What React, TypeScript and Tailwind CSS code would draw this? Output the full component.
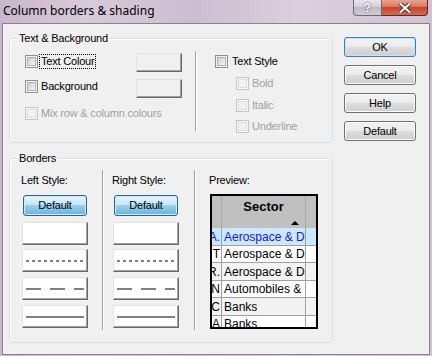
import React from 'react';

const dlg = { fontFamily: '"Liberation Sans", Arial, sans-serif' };

function Check({ disabled }: { disabled?: boolean }) {
  if (disabled) {
    return (
      <span className="block w-[13px] h-[13px] shrink-0 border border-[#c6c6c6] bg-[#f7f7f7] p-[1px]">
        <span className="block w-full h-full border border-[#dedede] bg-[#f2f2f2]" />
      </span>
    );
  }
  return (
    <span className="block w-[13px] h-[13px] shrink-0 border border-[#8e8f8f] bg-[#f4f4f4] p-[1px]">
      <span className="block w-full h-full border border-[#aeb0b3] bg-[linear-gradient(135deg,#cbcbcb,#f6f6f6)]" />
    </span>
  );
}

function PushButton({ label, isDefault }: { label: string; isDefault?: boolean }) {
  return (
    <button
      className={
        'w-[72px] h-[20px] rounded-[3px] border text-[11px] leading-none text-black bg-[linear-gradient(#f2f2f2,#ebebeb_50%,#dddddd_50%,#cfcfcf)] ' +
        (isDefault ? 'border-[#3c7fb1] shadow-[inset_0_0_0_1px_#c4e3f5]' : 'border-[#707070] shadow-[inset_0_0_0_1px_#fcfcfc]')
      }
    >
      {label}
    </button>
  );
}

function BlueButton() {
  return (
    <button className="ml-[1px] w-[64px] h-[21px] rounded-[3px] border border-[#2c628b] text-[11px] leading-none text-black bg-[linear-gradient(#e5f4fc,#c4e5f6_50%,#98d1ef_50%,#68b3db)] shadow-[inset_0_0_0_1px_#d4ecf8]">
      Default
    </button>
  );
}

function RaisedBox({ className, children }: { className: string; children?: React.ReactNode }) {
  return (
    <div
      className={
        'flex items-center justify-center border border-t-[#e3e3e3] border-l-[#e3e3e3] border-r-[#696969] border-b-[#696969] shadow-[inset_-1px_-1px_0_#a0a0a0] ' +
        className
      }
    >
      {children}
    </div>
  );
}

function LineSample({ dash }: { dash?: string }) {
  return (
    <svg width="58" height="2" className="block">
      <line x1="0" y1="1" x2="58" y2="1" stroke="#000" strokeWidth="1" strokeDasharray={dash} />
    </svg>
  );
}

function StyleColumn({ title }: { title: string }) {
  return (
    <div className="w-[66px] flex flex-col">
      <div className="mt-[9px] -ml-[1px] leading-[13px]">{title}</div>
      <div className="mt-[8px]">
        <BlueButton />
      </div>
      <RaisedBox className="mt-[6px] h-[23px] bg-white" />
      <RaisedBox className="mt-[4px] h-[23px] bg-white">
        <LineSample dash="3 3" />
      </RaisedBox>
      <RaisedBox className="mt-[5px] h-[23px] bg-white">
        <LineSample dash="15 9" />
      </RaisedBox>
      <RaisedBox className="mt-[5px] h-[23px] bg-white">
        <LineSample />
      </RaisedBox>
    </div>
  );
}

const rows = [
  { a: 'A.', b: 'Aerospace & Defense', bg: 'bg-[#cce8ff]', h: 'h-[18px]', sel: true },
  { a: 'T', b: 'Aerospace & Defense', bg: 'bg-white', h: 'h-[17px]' },
  { a: 'R.', b: 'Aerospace & Defense', bg: 'bg-[#f3f3f3]', h: 'h-[18px]' },
  { a: 'N', b: 'Automobiles & Parts', bg: 'bg-white', h: 'h-[17px]' },
  { a: 'C', b: 'Banks', bg: 'bg-[#f3f3f3]', h: 'h-[18px]' },
  { a: 'A', b: 'Banks', bg: 'bg-white', h: 'h-[17px]' },
];

function Preview() {
  return (
    <div className="ml-[1px] mt-[7px] w-[108px] h-[135px] border-2 border-black overflow-hidden text-[12px] tracking-normal">
      <div className="flex h-[32px] bg-[#c0c0c0]">
        <div className="w-[10px] border-r border-[#a8a8a8]" />
        <div className="w-[84px] border-r border-[#a8a8a8] flex flex-col items-center">
          <span className="mt-[3px] font-bold text-[13px] leading-[15px] text-black">Sector</span>
          <svg width="8" height="5" className="self-end mr-[6px] mt-[6px]">
            <polygon points="0,5 4,1 8,5" fill="#000" />
          </svg>
        </div>
        <div className="flex-1" />
      </div>
      {rows.map((r, i) => (
        <div key={i} className={'flex border-b border-[#a0a0a0] ' + r.h + ' ' + r.bg + (r.sel ? ' text-[#1616e8]' : ' text-black')}>
          <div className="w-[10px] border-r border-[#a0a0a0] flex justify-end items-center overflow-hidden whitespace-nowrap pr-[1px]">
            {r.a}
          </div>
          <div className="w-[84px] border-r border-[#a0a0a0] flex items-center overflow-hidden whitespace-nowrap pl-[2px]">
            {r.b}
          </div>
          <div className="flex-1" />
        </div>
      ))}
    </div>
  );
}

export default function App() {
  return (
    <div
      className="w-[432px] h-[356px] overflow-hidden flex flex-col bg-[linear-gradient(90deg,#c9b6cc,#d8cad9_20%,#cdbdd1_45%,#dccfdd_70%,#d0c1d3)]"
      style={dlg}
    >
      <div className="h-[23px] flex items-start justify-between">
        <div
          className="pl-[3px] pt-[2px] text-[12px] leading-[17px] text-black"
          style={{ fontFamily: '"Noto Sans", "Open Sans", sans-serif' }}
        >
          Column borders &amp; shading
        </div>
        <div className="flex mr-[4px]">
          <div className="w-[29px] h-[16px] rounded-bl-[4px] border border-t-0 border-[#6f6b75] bg-[linear-gradient(#e8e4ea,#d3cdd7_50%,#c0b8c5_50%,#d2cbd6)] flex items-center justify-center text-[12px] font-bold text-white [text-shadow:0_0_2px_#333]">
            ?
          </div>
          <div className="w-[46px] h-[16px] rounded-br-[4px] border border-t-0 border-l-0 border-[#5e2a22] bg-[linear-gradient(#e8a493,#d8705b_50%,#c7452c_50%,#d66a4f)] flex items-center justify-center">
            <svg width="12" height="10" viewBox="0 0 12 10">
              <path d="M1.5 1 L10.5 9 M10.5 1 L1.5 9" stroke="#3b3b3b" strokeWidth="4" strokeLinecap="square" />
              <path d="M1.5 1 L10.5 9 M10.5 1 L1.5 9" stroke="#fff" strokeWidth="2" strokeLinecap="square" />
            </svg>
          </div>
        </div>
      </div>

      <div className="ml-[2px] w-[428px] h-[332px] border border-[#8c7f91] bg-[#f0f0f0] flex items-start text-[11px] tracking-[-0.2px] text-black">
        <div className="ml-[6px] mt-[14px] flex flex-col">
          {/* Text & Background */}
          <div className="w-[324px] h-[105px] rounded-[3px] border border-[#d5dfe5] shadow-[inset_1px_1px_0_#fff]">
            <div className="-mt-[7px] ml-[7px] w-fit px-[2px] bg-[#f0f0f0] leading-[13px]">Text &amp; Background</div>
            <div className="flex items-start">
              <div className="pl-[15px] mt-[8px] flex flex-col">
                <div className="w-[157px] h-[19px] flex justify-between items-start">
                  <div className="mt-[1px] flex items-center">
                    <Check />
                    <span className="ml-[1px] px-[1px] border border-dotted border-black leading-[13px]">Text Colour</span>
                  </div>
                  <RaisedBox className="w-[46px] h-[19px] bg-[#f0f0f0]" />
                </div>
                <div className="mt-[7px] w-[157px] h-[19px] flex justify-between items-start">
                  <div className="mt-[1px] flex items-center">
                    <Check />
                    <span className="ml-[3px] leading-[13px]">Background</span>
                  </div>
                  <RaisedBox className="w-[46px] h-[19px] bg-[#f0f0f0]" />
                </div>
                <div className="mt-[9px] flex items-center">
                  <Check disabled />
                  <span className="ml-[3px] leading-[13px] text-[#a0a0a0]">Mix row &amp; column colours</span>
                </div>
              </div>
              <div className="ml-[13px] mt-[6px] h-[80px] border-l border-[#a0a0a0] w-[2px] bg-white bg-clip-content" />
              <div className="ml-[18px] mt-[10px] flex flex-col">
                <div className="flex items-center">
                  <Check />
                  <span className="ml-[4px] leading-[13px]">Text Style</span>
                </div>
                <div className="ml-[21px] mt-[9px] flex items-center">
                  <Check disabled />
                  <span className="ml-[3px] leading-[13px] text-[#a0a0a0]">Bold</span>
                </div>
                <div className="ml-[21px] mt-[9px] flex items-center">
                  <Check disabled />
                  <span className="ml-[3px] leading-[13px] text-[#a0a0a0]">Italic</span>
                </div>
                <div className="ml-[21px] mt-[8px] flex items-center">
                  <Check disabled />
                  <span className="ml-[3px] leading-[13px] text-[#a0a0a0]">Underline</span>
                </div>
              </div>
            </div>
          </div>

          {/* Borders */}
          <div className="mt-[15px] w-[324px] h-[185px] rounded-[3px] border border-[#d5dfe5] shadow-[inset_1px_1px_0_#fff]">
            <div className="-mt-[7px] ml-[7px] w-fit px-[2px] bg-[#f0f0f0] leading-[13px]">Borders</div>
            <div className="flex items-start pl-[12px]">
              <StyleColumn title="Left Style:" />
              <div className="ml-[14px] mt-[5px] h-[160px] border-l border-[#a0a0a0] w-[2px] bg-white bg-clip-content" />
              <div className="ml-[9px]">
                <StyleColumn title="Right Style:" />
              </div>
              <div className="ml-[15px] mt-[5px] h-[160px] border-l border-[#a0a0a0] w-[2px] bg-white bg-clip-content" />
              <div className="ml-[13px] flex flex-col">
                <div className="mt-[9px] leading-[13px]">Preview:</div>
                <Preview />
              </div>
            </div>
          </div>
        </div>

        <div className="ml-[11px] mt-[13px] flex flex-col gap-[8px]">
          <PushButton label="OK" isDefault />
          <PushButton label="Cancel" />
          <PushButton label="Help" />
          <PushButton label="Default" />
        </div>
      </div>
    </div>
  );
}
